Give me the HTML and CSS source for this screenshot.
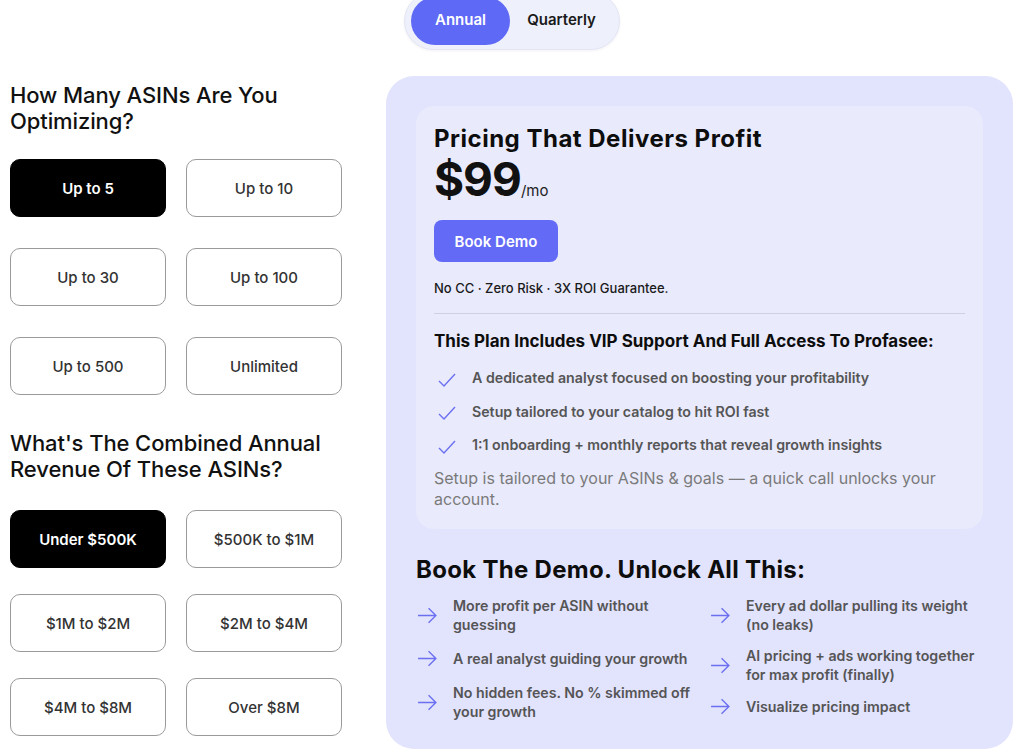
FILE: index.html
```html
<!DOCTYPE html>
<html lang="en">
<head>
<meta charset="utf-8">
<title>Pricing</title>
<link rel="stylesheet" href="styles.css">
</head>
<body>
<div class="top">
  <div class="toggle">
    <button class="tog active">Annual</button>
    <button class="tog">Quarterly</button>
  </div>
</div>
<main class="layout">
  <section class="left">
    <h2 class="q">How Many ASINs Are You Optimizing?</h2>
    <div class="opts opts-a">
      <button class="opt sel">Up to 5</button>
      <button class="opt">Up to 10</button>
      <button class="opt">Up to 30</button>
      <button class="opt">Up to 100</button>
      <button class="opt">Up to 500</button>
      <button class="opt">Unlimited</button>
    </div>
    <h2 class="q q2">What's The Combined Annual Revenue Of These ASINs?</h2>
    <div class="opts opts-b">
      <button class="opt sel">Under $500K</button>
      <button class="opt">$500K to $1M</button>
      <button class="opt">$1M to $2M</button>
      <button class="opt">$2M to $4M</button>
      <button class="opt">$4M to $8M</button>
      <button class="opt">Over $8M</button>
    </div>
  </section>
  <section class="card">
    <div class="inner">
      <h1 class="title">Pricing That Delivers Profit</h1>
      <div class="price"><span class="amt">$99</span><span class="per">/mo</span></div>
      <button class="demo">Book Demo</button>
      <p class="note">No CC · Zero Risk · 3X ROI Guarantee.</p>
      <hr class="rule">
      <h3 class="inc">This Plan Includes VIP Support And Full Access To Profasee:</h3>
      <ul class="checks">
        <li><svg class="ck" viewBox="0 0 20 20"><path d="M2 11 L7 16 L18 4"/></svg>A dedicated analyst focused on boosting your profitability</li>
        <li><svg class="ck" viewBox="0 0 20 20"><path d="M2 11 L7 16 L18 4"/></svg>Setup tailored to your catalog to hit ROI fast</li>
        <li><svg class="ck" viewBox="0 0 20 20"><path d="M2 11 L7 16 L18 4"/></svg>1:1 onboarding + monthly reports that reveal growth insights</li>
      </ul>
      <p class="setup">Setup is tailored to your ASINs &amp; goals — a quick call unlocks your account.</p>
    </div>
    <h2 class="unlock">Book The Demo. Unlock All This:</h2>
    <div class="perks">
      <div class="perk-col">
        <div class="perk"><svg class="ar" viewBox="0 0 20 20"><path d="M1 10 H18 M11 3 L18 10 L11 17"/></svg><span>More profit per ASIN without guessing</span></div>
        <div class="perk"><svg class="ar" viewBox="0 0 20 20"><path d="M1 10 H18 M11 3 L18 10 L11 17"/></svg><span>A real analyst guiding your growth</span></div>
        <div class="perk"><svg class="ar" viewBox="0 0 20 20"><path d="M1 10 H18 M11 3 L18 10 L11 17"/></svg><span>No hidden fees. No % skimmed off your growth</span></div>
      </div>
      <div class="perk-col perk-col-r">
        <div class="perk"><svg class="ar" viewBox="0 0 20 20"><path d="M1 10 H18 M11 3 L18 10 L11 17"/></svg><span>Every ad dollar pulling its weight (no leaks)</span></div>
        <div class="perk"><svg class="ar" viewBox="0 0 20 20"><path d="M1 10 H18 M11 3 L18 10 L11 17"/></svg><span>AI pricing + ads working together for max profit (finally)</span></div>
        <div class="perk"><svg class="ar" viewBox="0 0 20 20"><path d="M1 10 H18 M11 3 L18 10 L11 17"/></svg><span>Visualize pricing impact</span></div>
      </div>
    </div>
  </section>
</main>
</body>
</html>
```
FILE: styles.css
```css
* { box-sizing: border-box; }
html, body { margin: 0; padding: 0; background: #fff; }
body {
  font-family: Inter, "Noto Sans", sans-serif;
  color: #111;
  width: 1024px;
  height: 754px;
  overflow: hidden;
}
button { font-family: inherit; cursor: pointer; }

.top { display: flex; justify-content: center; }
.toggle {
  display: flex;
  align-items: center;
  margin-top: -8px;
  padding: 4px 6px;
  background: #eef0fc;
  border: 1px solid #e4e6f4;
  border-radius: 30px;
  box-shadow: 0 1px 3px rgba(30, 40, 120, 0.06);
}
.tog {
  height: 48px;
  border: 0;
  border-radius: 24px;
  background: transparent;
  font-size: 15px;
  font-weight: 600;
  color: #1a1a1a;
  padding: 0 0 4px;
}
.tog:first-child { width: 99px; }
.tog:last-child { width: 103px; }
.tog.active { background: #5e69f6; color: #fff; }

.layout {
  display: grid;
  grid-template-columns: 331px 627px;
  column-gap: 45px;
  padding-left: 10px;
  margin-top: 26px;
}

.left { padding-top: 6px; }
.q {
  margin: 0;
  font-size: 22px;
  line-height: 26px;
  font-weight: 500;
  color: #111;
  letter-spacing: -0.1px;
}
.q2 { margin-top: 35px; }
.opts {
  display: grid;
  grid-template-columns: 156px 156px;
  column-gap: 20px;
}
.opts-a { margin-top: 25px; row-gap: 31px; grid-auto-rows: 58px; }
.opts-b { margin-top: 28px; row-gap: 26px; grid-auto-rows: 58px; }
.opt {
  border: 1px solid #9a9a9a;
  border-radius: 10px;
  background: #fff;
  font-size: 15px;
  font-weight: 500;
  color: #333;
}
.opt.sel { background: #000; border-color: #000; color: #fff; font-weight: 600; }

.card {
  background: #e2e3fd;
  border-radius: 28px;
  padding: 30px 30px 30px;
  height: 673px;
}
.inner {
  background: #e9eafc;
  border-radius: 18px;
  padding: 19px 18px 18px;
  height: 423px;
}
.title {
  margin: 0;
  font-size: 24px;
  line-height: 28px;
  font-weight: 700;
  letter-spacing: 0.5px;
  color: #0d0d0d;
}
.price { display: flex; align-items: baseline; margin-top: 1px; height: 50px; }
.amt { font-size: 46px; font-weight: 700; line-height: 50px; letter-spacing: -1px; }
.per { font-size: 15px; color: #222; }
.demo {
  display: block;
  margin-top: 16px;
  width: 124px;
  height: 42px;
  border: 0;
  border-radius: 8px;
  background: #636af5;
  color: #fff;
  font-size: 15px;
  font-weight: 600;
}
.note { margin: 18px 0 0; font-size: 13px; font-weight: 500; color: #1a1a1a; line-height: 16px; }
.rule { border: 0; border-top: 1px solid #cfd0e2; margin: 17px 0 0; }
.inc { margin: 17px 0 0; font-size: 17px; font-weight: 700; line-height: 20px; color: #0d0d0d; }
.checks { list-style: none; margin: 10px 0 0; padding: 0; }
.checks li {
  display: flex;
  align-items: center;
  height: 33.5px;
  font-size: 14.2px;
  font-weight: 600;
  color: #555;
}
.ck {
  width: 20px; height: 20px;
  margin: 4px 15px 0 3px;
  fill: none; stroke: #6b70f0; stroke-width: 1.4;
}
.setup { margin: 6px 0 0; font-size: 16px; line-height: 21px; color: #7a7a7a; }

.unlock {
  margin: 27px 0 0;
  font-size: 24px;
  line-height: 28px;
  font-weight: 700;
  letter-spacing: 0.3px;
  color: #0d0d0d;
}
.perks {
  display: grid;
  grid-template-columns: 293px 1fr;
  margin-top: 12px;
}
.perk-col { display: flex; flex-direction: column; gap: 14px; }
.perk-col-r { gap: 12px; }
.perk {
  display: flex;
  align-items: center;
  gap: 15px;
  font-size: 14.2px;
  font-weight: 600;
  line-height: 19px;
  color: #555;
}
.perk span { max-width: 240px; }
.ar {
  flex: none;
  width: 21px; height: 21px;
  margin-left: 1px;
  fill: none; stroke: #6b70f0; stroke-width: 1.3;
}
```
